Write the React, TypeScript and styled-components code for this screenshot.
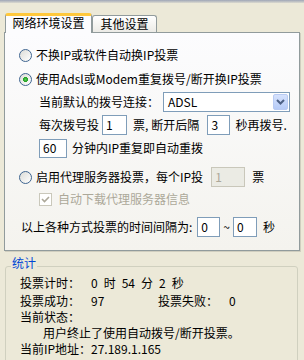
import React from "react";
import styled, { createGlobalStyle } from "styled-components";

const Global = createGlobalStyle`
  html, body { margin: 0; padding: 0; background: #ECE9D8; }
  body {
    font-family: "Noto Sans CJK SC", "Noto Sans", sans-serif;
    font-size: 12px;
    color: #000;
  }
  * { box-sizing: border-box; }
`;

const Window = styled.div`
  width: 304px;
  height: 360px;
  overflow: hidden;
  background: #ECE9D8;
`;

const TopEdge = styled.div`
  height: 3px;
  background: linear-gradient(#9EA6B6, #DCDAD0);
`;

const TabStrip = styled.div`
  display: flex;
  align-items: flex-end;
  padding-left: 5px;
  margin-top: 10px;
  height: 19px;
`;

const Tab = styled.div<{ $active?: boolean; $w: number }>`
  width: ${(p) => p.$w}px;
  height: ${(p) => (p.$active ? 20 : 17)}px;
  margin-bottom: ${(p) => (p.$active ? -1 : 0)}px;
  border: 1px solid #919b9c;
  border-bottom: none;
  border-top: ${(p) => (p.$active ? "3px solid #FFC83C" : "1px solid #919b9c")};
  border-radius: 3px 3px 0 0;
  background: ${(p) => (p.$active ? "#FCFCFE" : "linear-gradient(#FFFFFF, #ECEBE6)")};
  position: relative;
  z-index: ${(p) => (p.$active ? 1 : 0)};
  display: flex;
  align-items: center;
  justify-content: center;
  padding-bottom: ${(p) => (p.$active ? 3 : 0)}px;
  line-height: 14px;
  white-space: nowrap;
`;

const Panel = styled.div`
  margin-left: 4px;
  width: 296px;
  height: 219px;
  border: 1px solid #919b9c;
  box-shadow: 1px 1px 0 #d0cebf;
  background: linear-gradient(#fcfcfe, #f4f3ee);
  padding: 12px 0 0 14px;
  display: flex;
  flex-direction: column;
`;

const Row = styled.div<{ $indent?: number; $top?: number }>`
  display: flex;
  align-items: center;
  height: 20px;
  flex: none;
  padding-left: ${(p) => p.$indent ?? 0}px;
  margin-top: ${(p) => p.$top ?? 0}px;
  white-space: nowrap;
  line-height: 14px;
`;

const Text = styled.span<{ $ml?: number; $disabled?: boolean }>`
  margin-left: ${(p) => p.$ml ?? 0}px;
  color: ${(p) => (p.$disabled ? "#ACA899" : "#000")};
`;

const Radio = styled.span<{ $checked?: boolean }>`
  width: 13px;
  height: 13px;
  border-radius: 50%;
  border: 1px solid #3f6590;
  background: ${(p) =>
    p.$checked
      ? "radial-gradient(circle at 50% 50%, #5ccb5c 0, #21a121 2.2px, transparent 2.8px), linear-gradient(135deg, #dcdcd7, #ffffff)"
      : "linear-gradient(135deg, #dcdcd7, #ffffff)"};
  margin-right: 4px;
  flex: none;
`;

const CheckBox = styled.span`
  width: 13px;
  height: 13px;
  border: 1px solid #cac8bb;
  background: #fff;
  display: flex;
  align-items: center;
  justify-content: center;
  flex: none;
`;

const TextBox = styled.span<{ $w: number; $h?: number; $ml?: number; $disabled?: boolean }>`
  width: ${(p) => p.$w}px;
  height: ${(p) => p.$h ?? 20}px;
  margin-left: ${(p) => p.$ml ?? 0}px;
  border: 1px solid ${(p) => (p.$disabled ? "#C9C7BA" : "#7F9DB9")};
  background: ${(p) => (p.$disabled ? "#EBEBE4" : "#fff")};
  color: ${(p) => (p.$disabled ? "#ACA899" : "#000")};
  padding: 0 3px;
  display: flex;
  align-items: center;
  flex: none;
`;

const Select = styled.span`
  width: 127px;
  height: 20px;
  margin-left: 4px;
  border: 1px solid #7f9db9;
  background: #fff;
  display: flex;
  align-items: center;
  justify-content: space-between;
  padding: 1px 1px 1px 4px;
`;

const DropButton = styled.span`
  width: 15px;
  height: 16px;
  border: 1px solid #b9cbf3;
  border-radius: 2px;
  background: linear-gradient(#d6e2fd, #b6cbf7);
  display: flex;
  align-items: center;
  justify-content: center;
`;

const GroupBox = styled.fieldset`
  margin: 6px 6px 0 5px;
  border: 1px solid #d0d0bf;
  border-radius: 3px;
  padding: 0 0 0 14px;
  min-height: 120px;
`;

const Legend = styled.legend`
  color: #0046d5;
  line-height: 12px;
  padding: 0 1px 6px 1px;
  margin-left: -9px;
`;

const StatRow = styled.div<{ $top?: number; $indent?: number }>`
  display: flex;
  align-items: center;
  height: 16px;
  margin-top: ${(p) => p.$top ?? 0}px;
  padding-left: ${(p) => p.$indent ?? 0}px;
  white-space: nowrap;
  line-height: 14px;
`;

const Label = styled.span<{ $w?: number }>`
  width: ${(p) => p.$w ?? 71}px;
  flex: none;
`;

const Value = styled.span<{ $w?: number }>`
  width: ${(p) => (p.$w ? `${p.$w}px` : "auto")};
  flex: none;
`;

const Timer = styled.span`
  display: flex;
  gap: 6px;
`;

export default function App() {
  return (
    <>
      <Global />
      <Window>
        <TopEdge />
        <TabStrip>
          <Tab $active $w={87}>网络环境设置</Tab>
          <Tab $w={65}>其他设置</Tab>
        </TabStrip>
        <Panel>
          <Row>
            <Radio />
            <Text>不换IP或软件自动换IP投票</Text>
          </Row>
          <Row $top={4}>
            <Radio $checked />
            <Text>使用Adsl或Modem重复拨号/断开换IP投票</Text>
          </Row>
          <Row $top={3} $indent={20}>
            <Text>当前默认的拨号连接：</Text>
            <Select>
              <span>ADSL</span>
              <DropButton>
                <svg width="9" height="6" viewBox="0 0 9 6">
                  <path d="M1 1 L4.5 4.5 L8 1" fill="none" stroke="#4D6185" strokeWidth="2" />
                </svg>
              </DropButton>
            </Select>
          </Row>
          <Row $top={3} $indent={20}>
            <Text>每次拨号投</Text>
            <TextBox $w={25} $ml={3}>1</TextBox>
            <Text $ml={6}>票,</Text>
            <Text $ml={3}>断开后隔</Text>
            <TextBox $w={23} $ml={8}>3</TextBox>
            <Text $ml={5}>秒再拨号.</Text>
          </Row>
          <Row $top={3} $indent={20}>
            <TextBox $w={28} $h={19}>60</TextBox>
            <Text $ml={5}>分钟内IP重复即自动重拨</Text>
          </Row>
          <Row $top={9}>
            <Radio />
            <Text>启用代理服务器投票，每个IP投</Text>
            <TextBox $w={34} $ml={8} $disabled>1</TextBox>
            <Text $ml={7}>票</Text>
          </Row>
          <Row $top={2} $indent={20}>
            <CheckBox>
              <svg width="9" height="9" viewBox="0 0 9 9">
                <path d="M1 4 L3.5 6.5 L8 2" fill="none" stroke="#ACA899" strokeWidth="1.6" />
              </svg>
            </CheckBox>
            <Text $ml={6} $disabled>自动下载代理服务器信息</Text>
          </Row>
          <Row $top={8} $indent={2}>
            <Text>以上各种方式投票的时间间隔为:</Text>
            <TextBox $w={23} $ml={5}>0</TextBox>
            <Text $ml={3}>~</Text>
            <TextBox $w={24} $ml={3}>0</TextBox>
            <Text $ml={6}>秒</Text>
          </Row>
        </Panel>
        <GroupBox>
          <Legend>统计</Legend>
          <StatRow>
            <Label>投票计时：</Label>
            <Timer>
              <span>0</span>
              <span>时</span>
              <span>54</span>
              <span>分</span>
              <span>2</span>
              <span>秒</span>
            </Timer>
          </StatRow>
          <StatRow $top={2}>
            <Label>投票成功：</Label>
            <Value $w={67}>97</Value>
            <Label>投票失败：</Label>
            <Value>0</Value>
          </StatRow>
          <StatRow>
            <Label>当前状态：</Label>
          </StatRow>
          <StatRow $indent={23}>用户终止了使用自动拨号/断开投票。</StatRow>
          <StatRow>
            <Label>当前IP地址：</Label>
            <Value>27.189.1.165</Value>
          </StatRow>
        </GroupBox>
      </Window>
    </>
  );
}
